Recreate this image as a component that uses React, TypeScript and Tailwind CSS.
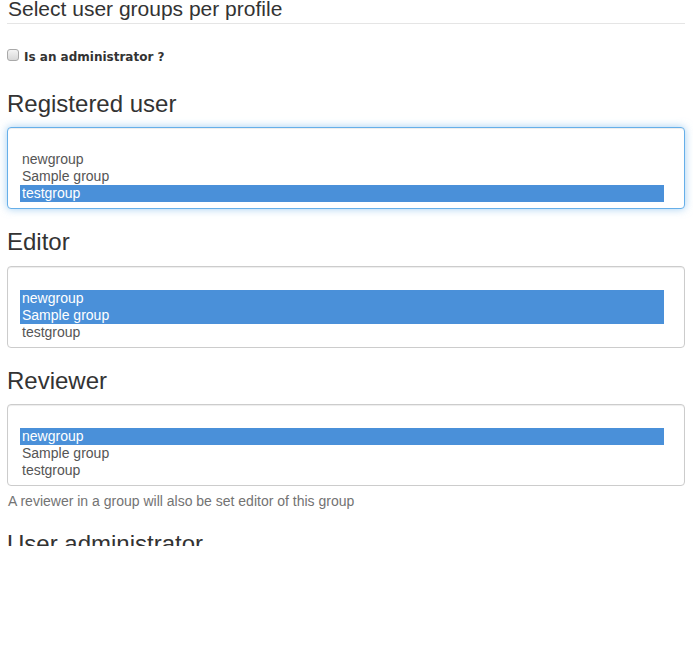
import React from 'react';

interface GroupSelectProps {
    title: string;
    selected: string[];
    focused?: boolean;
}

const groups = ['newgroup', 'Sample group', 'testgroup'];

function GroupSelect({ title, selected, focused }: GroupSelectProps) {
    return (
        <div>
            <h3 className="mt-5 mb-[10px] text-[24px] leading-[1.1] text-[#333]">{title}</h3>
            <div
                className={
                    focused
                        ? 'rounded border border-[#66afe9] bg-white py-[6px] pl-[12px] pr-[20px] shadow-[inset_0_1px_1px_rgba(0,0,0,0.075),0_0_8px_rgba(102,175,233,0.6)]'
                        : 'rounded border border-[#ccc] bg-white py-[6px] pl-[12px] pr-[20px] shadow-[inset_0_1px_1px_rgba(0,0,0,0.075)]'
                }
            >
                <div className="h-[17px]"></div>
                {groups.map((g) =>
                    selected.includes(g) ? (
                        <div key={g} className="h-[17px] bg-[#4a90d9] pl-[2px] text-[14px] leading-[17px] text-white">
                            {g}
                        </div>
                    ) : (
                        <div key={g} className="h-[17px] pl-[2px] text-[14px] leading-[17px] text-[#555]">
                            {g}
                        </div>
                    )
                )}
            </div>
        </div>
    );
}

export default function App() {
    return (
        <div className="h-[546px] overflow-hidden bg-white font-['Liberation_Sans',Arial,sans-serif] text-[#333]">
            <div className="pl-[7px] pr-[8px]">
                {/* legend */}
                <div className="-mt-[3px] border-b border-[#e5e5e5] pb-[3px] pl-[1px] text-[21px] leading-[23px] text-[#333]">
                    Select user groups per profile
                </div>

                <div className="mt-[23px] flex h-[24px] items-start gap-[5px] pb-[4px]">
                    <span className="mt-[2px] block h-[12px] w-[12px] rounded-[3px] border border-[#a9a9a9] bg-gradient-to-b from-[#f4f4f4] to-[#d8d8d8]"></span>
                    <label className="font-['DejaVu_Sans',sans-serif] text-[12px] font-bold leading-[20px] text-[#333]">
                        Is an administrator ?
                    </label>
                </div>

                <GroupSelect title="Registered user" selected={['testgroup']} focused />
                <GroupSelect title="Editor" selected={['newgroup', 'Sample group']} />
                <GroupSelect title="Reviewer" selected={['newgroup']} />
                <p className="mt-[5px] mb-[10px] pl-[1px] text-[14px] leading-[20px] text-[#737373]">
                    A reviewer in a group will also be set editor of this group
                </p>

                <h3 className="mt-5 mb-[10px] text-[24px] leading-[1.1] text-[#333]">User administrator</h3>
            </div>
        </div>
    );
}
